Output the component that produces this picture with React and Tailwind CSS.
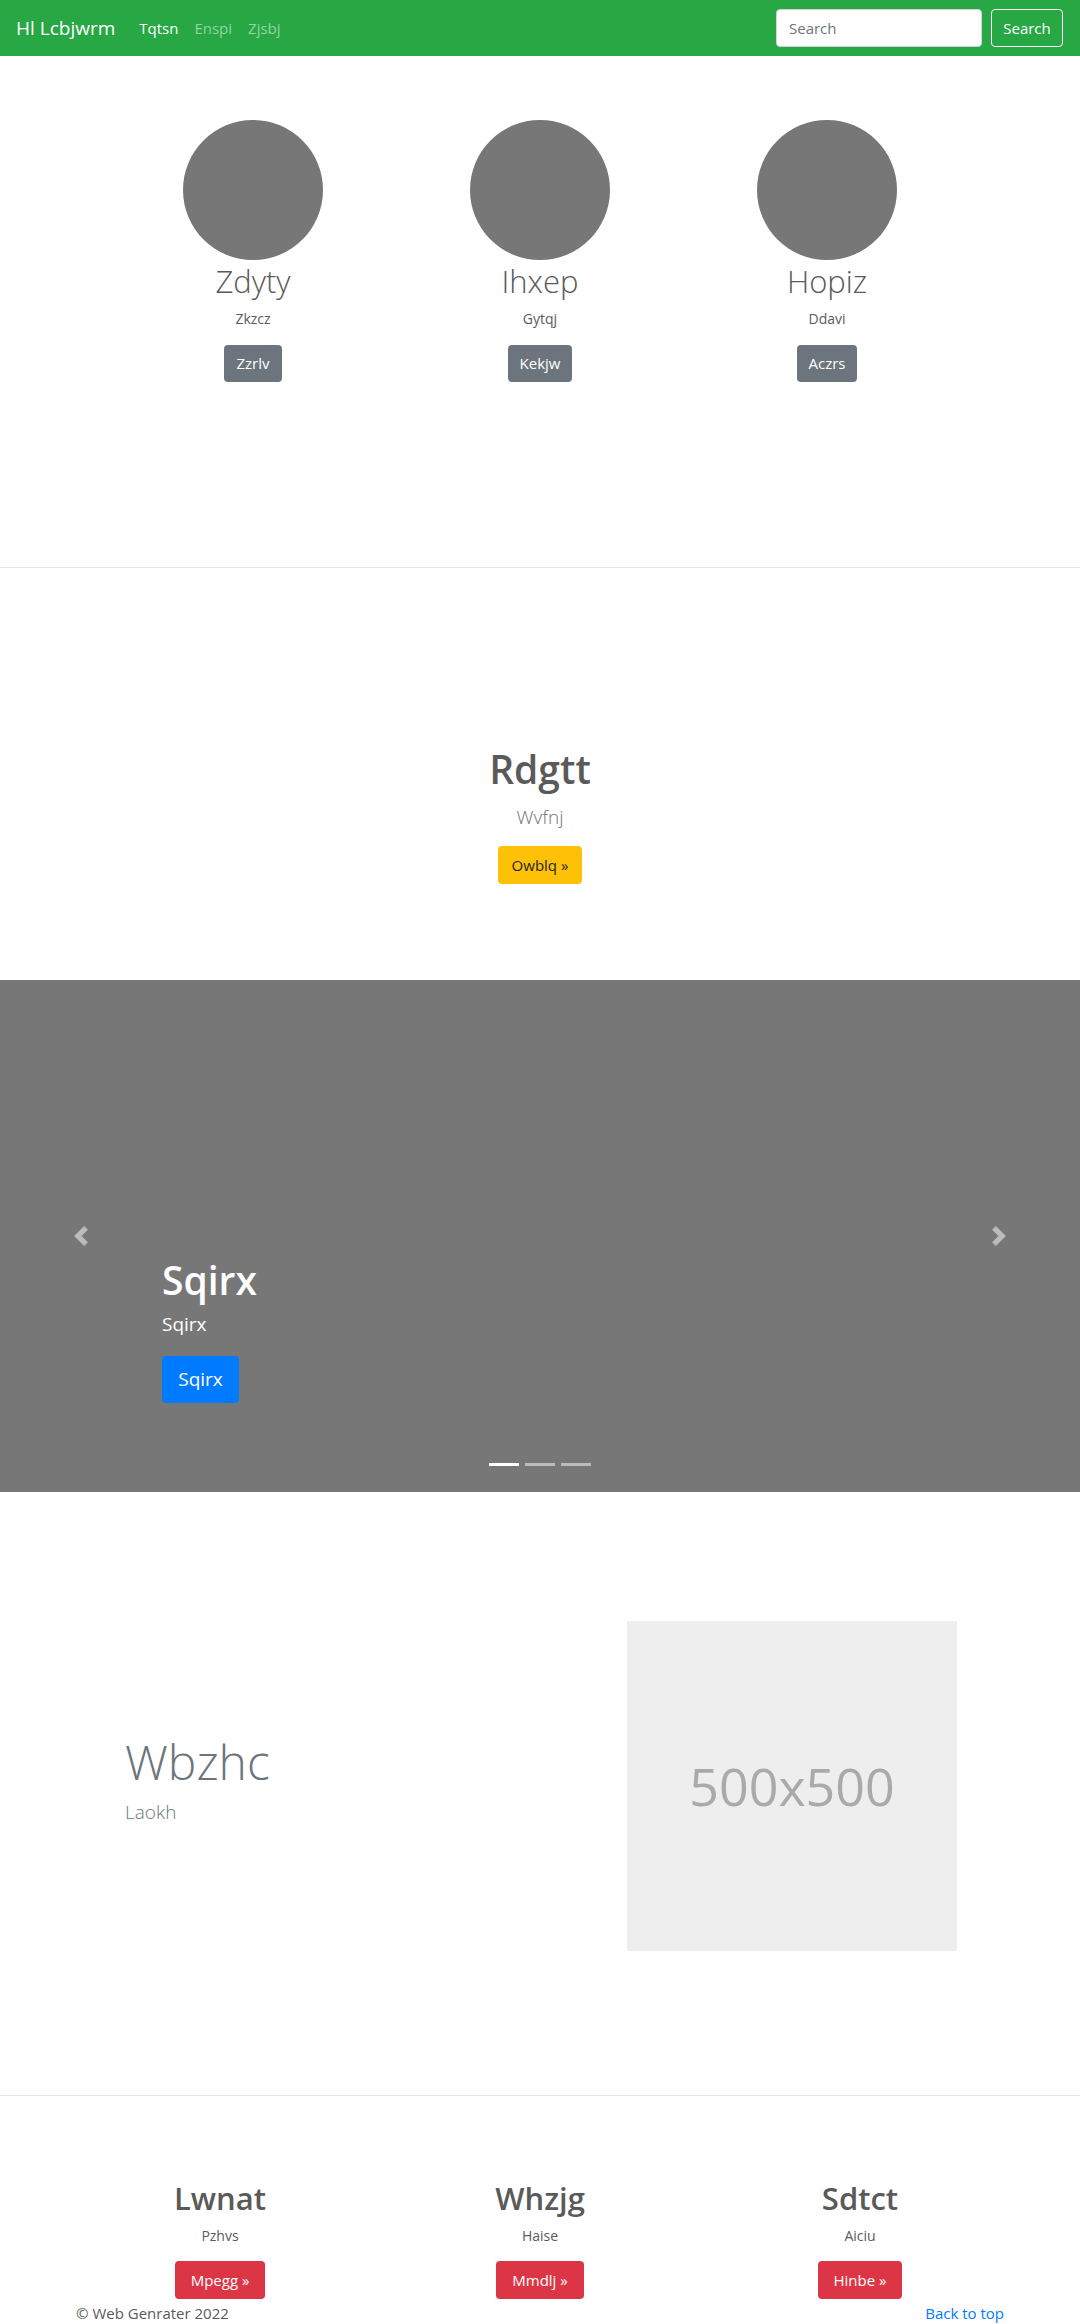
import React from "react";

const font = { fontFamily: '"Open Sans", "Noto Sans", Arial, sans-serif' };

function Chevron({ dir }) {
  return (
    <svg width="20" height="20" viewBox="0 0 8 8" fill="rgba(255,255,255,0.5)">
      {dir === "left" ? (
        <path d="M5.25 0l-4 4 4 4 1.5-1.5L4.25 4l2.5-2.5L5.25 0z" />
      ) : (
        <path d="M2.75 0l-1.5 1.5L3.75 4l-2.5 2.5L2.75 8l4-4-4-4z" />
      )}
    </svg>
  );
}

export default function App() {
  const top = [
    { t: "Zdyty", s: "Zkzcz", b: "Zzrlv" },
    { t: "Ihxep", s: "Gytqj", b: "Kekjw" },
    { t: "Hopiz", s: "Ddavi", b: "Aczrs" },
  ];
  const bottom = [
    { t: "Lwnat", s: "Pzhvs", b: "Mpegg »" },
    { t: "Whzjg", s: "Haise", b: "Mmdlj »" },
    { t: "Sdtct", s: "Aiciu", b: "Hinbe »" },
  ];
  return (
    <div className="w-[1080px] bg-white text-[#5a5a5a]" style={font}>
      {/* Navbar */}
      <nav className="h-[56px] bg-[#28a745] flex items-center pl-4 pr-[17px]">
        <span className="text-white text-[19px] mr-[16px]">Hl Lcbjwrm</span>
        <div className="flex items-center text-[15px]">
          <span className="px-2 text-white">Tqtsn</span>
          <span className="px-2 text-white/50">Enspi</span>
          <span className="px-2 text-white/50">Zjsbj</span>
        </div>
        <div className="ml-auto flex items-center gap-[9px]">
          <input
            placeholder="Search"
            className="w-[206px] h-[38px] rounded bg-white border border-[#ced4da] px-3 text-[15px] text-[#495057] placeholder:text-[#6c757d] outline-none"
          />
          <button className="w-[72px] h-[38px] rounded border border-white text-white text-[15px]">
            Search
          </button>
        </div>
      </nav>

      {/* Top circles */}
      <section className="pt-[64px] h-[511px]">
        <div className="mx-auto w-[861px] grid grid-cols-3">
          {top.map((c) => (
            <div key={c.t} className="flex flex-col items-center">
              <div className="w-[140px] h-[140px] rounded-full bg-[#777]" />
              <h2 className="text-[31px] leading-[38px] font-light mt-[2px]">{c.t}</h2>
              <p className="text-[14px] leading-[21px] mt-[8px]">{c.s}</p>
              <button className="mt-[16px] h-[37px] px-[12px] rounded bg-[#6c757d] text-white text-[15px]">
                {c.b}
              </button>
            </div>
          ))}
        </div>
      </section>
      <hr className="border-t border-[#e5e5e5]" />

      {/* Section 2 */}
      <section className="h-[412px] flex flex-col items-center pt-[177px]">
        <h1 className="text-[39px] leading-[48px] font-semibold">Rdgtt</h1>
        <p className="text-[19px] leading-[30px] font-light text-[#6c757d] mt-[9px]">Wvfnj</p>
        <button className="mt-[14px] h-[38px] w-[84px] rounded bg-[#ffc107] text-[#212529] text-[15px]">
          Owblq »
        </button>
      </section>

      {/* Carousel */}
      <section className="relative h-[512px] bg-[#777] flex items-center">
        <div className="w-[162px] flex justify-center">
          <Chevron dir="left" />
        </div>
        <div className="flex-1" />
        <div className="w-[162px] flex justify-center">
          <Chevron dir="right" />
        </div>
        <div className="absolute left-[162px] top-[276px] text-white">
          <h1 className="text-[39px] leading-[48px] font-semibold">Sqirx</h1>
          <p className="text-[19px] leading-[30px] mt-[5px]">Sqirx</p>
          <button className="mt-[17px] h-[47px] w-[77px] rounded bg-[#007bff] text-white text-[19px]">
            Sqirx
          </button>
        </div>
        <div className="absolute left-0 right-0 top-[483px] flex justify-center gap-[6px]">
          <span className="w-[30px] h-[3px] bg-white" />
          <span className="w-[30px] h-[3px] bg-white/50" />
          <span className="w-[30px] h-[3px] bg-white/50" />
        </div>
      </section>

      {/* Featurette */}
      <section className="h-[603px] pt-[129px]">
        <div className="flex items-center">
          <div className="w-[627px] pl-[125px] mb-[14px]">
            <h2 className="text-[48px] leading-[58px] font-light text-[#6c757d]">Wbzhc</h2>
            <p className="text-[19px] leading-[28px] font-light text-[#6c757d] mt-[7px]">Laokh</p>
          </div>
          <div className="w-[330px] h-[330px] shrink-0 bg-[#eee] flex items-center justify-center text-[#aaa] text-[52px]">
            500x500
          </div>
        </div>
      </section>
      <hr className="border-t border-[#e5e5e5]" />

      {/* Bottom columns */}
      <section className="pt-[83px]">
        <div className="mx-auto w-[960px] grid grid-cols-3">
          {bottom.map((c) => (
            <div key={c.t} className="flex flex-col items-center">
              <h2 className="text-[31px] leading-[38px] font-semibold">{c.t}</h2>
              <p className="text-[14px] leading-[21px] mt-[8px]">{c.s}</p>
              <button className="mt-[15px] h-[38px] px-[16px] rounded bg-[#dc3545] text-white text-[15px]">
                {c.b}
              </button>
            </div>
          ))}
        </div>
        <footer className="flex justify-between pl-[76px] pr-[76px] text-[15px] leading-[22px] mt-[3px]">
          <span>© Web Genrater 2022</span>
          <span className="text-[#007bff]">Back to top</span>
        </footer>
      </section>
    </div>
  );
}
